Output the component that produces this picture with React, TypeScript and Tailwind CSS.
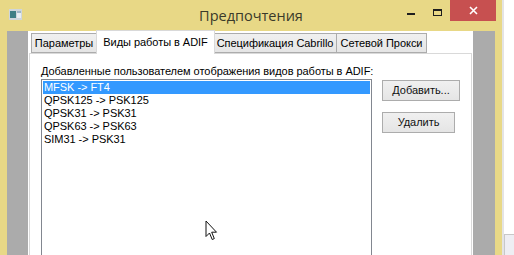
import React from "react";

const tabs = [
  { label: "Параметры", w: "w-[66px]", active: false },
  { label: "Виды работы в ADIF", w: "w-[119px]", active: true },
  { label: "Спецификация Cabrillo", w: "w-[123px]", active: false },
  { label: "Сетевой Прокси", w: "w-[90px]", active: false },
];

const modes = [
  "MFSK -> FT4",
  "QPSK125 -> PSK125",
  "QPSK31 -> PSK31",
  "QPSK63 -> PSK63",
  "SIM31 -> PSK31",
];

const AppIcon = () => (
  <svg width="13" height="11" viewBox="0 0 13 11">
    <rect x="0" y="0" width="13" height="11" fill="#cfd6dc" />
    <rect x="1" y="2" width="6" height="7" fill="#3f7f86" />
    <rect x="8" y="2" width="4" height="7" fill="#e9eef3" />
    <rect x="8" y="2" width="4" height="2" fill="#9fb6c8" />
  </svg>
);

const Cursor = () => (
  <svg
    className="absolute left-[205px] top-[220px]"
    width="13"
    height="21"
    viewBox="0 0 13 21"
  >
    <path
      d="M1 1 L1 16.5 L4.5 13 L7.2 19.5 L9.3 18.6 L6.7 12.2 L11.5 12.2 Z"
      fill="#fff"
      stroke="#111"
      strokeWidth="1"
      strokeLinejoin="round"
    />
  </svg>
);

const Button = ({ label, w }: { label: string; w: string }) => (
  <button
    className={`${w} h-[21px] whitespace-nowrap border border-[#acacac] bg-gradient-to-b from-[#f0f0f0] to-[#e5e5e5] text-[11px] leading-[19px] text-[#111]`}
  >
    {label}
  </button>
);

export default function App() {
  return (
    <div className="relative flex h-[255px] w-[514px] overflow-hidden bg-white font-['Liberation_Sans',Arial,sans-serif] text-[11px] tracking-[-0.04px] text-black">
      {/* window */}
      <div className="flex w-[502px] shrink-0 flex-col bg-[#e8d886]">
        {/* title bar */}
        <div className="flex h-[31px] shrink-0 items-start">
          <div className="w-[104px] pl-[9px] pt-[9px]">
            <AppIcon />
          </div>
          <div className="flex-1 pt-[6px] text-center font-['Open_Sans',sans-serif] text-[14.5px] leading-[20px] tracking-normal text-[#3a3a2a]">
            Предпочтения
          </div>
          <div className="flex h-[21px] w-[104px] justify-end pr-[6px]">
            <div className="flex w-[26px] flex-col items-center pt-[13px]">
              <div className="h-[2px] w-[8px] bg-[#1e1e1e]" />
            </div>
            <div className="flex w-[26px] flex-col items-center pt-[9px]">
              <div className="h-[7px] w-[9px] border border-t-2 border-[#1e1e1e]" />
            </div>
            <div className="flex w-[46px] items-center justify-center bg-[#c75050]">
              <svg width="9" height="9" viewBox="0 0 9 9">
                <path d="M1 1 L8 8 M8 1 L1 8" stroke="#fff" strokeWidth="1.6" />
              </svg>
            </div>
          </div>
        </div>

        {/* body */}
        <div className="flex flex-1 px-[7px]">
          <div className="w-[21px] bg-[#ababab]" />
          <div className="flex w-[445px] flex-col bg-white px-[1px]">
            {/* tab bar */}
            <div className="flex h-[22px] items-end pl-[2px]">
              {tabs.map((t) =>
                t.active ? (
                  <div
                    key={t.label}
                    className={`${t.w} relative z-10 -mx-[1px] -mb-[1px] flex h-[24px] items-center justify-center whitespace-nowrap border border-b-0 border-[#d9d9d9] bg-white pb-[1px]`}
                  >
                    {t.label}
                  </div>
                ) : (
                  <div
                    key={t.label}
                    className={`${t.w} flex h-[20px] items-center justify-center whitespace-nowrap border border-l-0 border-[#acacac] bg-gradient-to-b from-[#f0f0f0] to-[#e5e5e5] first:border-l`}
                  >
                    {t.label}
                  </div>
                )
              )}
            </div>
            {/* panel */}
            <div className="flex flex-1 flex-col border border-b-0 border-[#d9d9d9] pl-[11px] pt-[10px]">
              <div className="whitespace-nowrap leading-[14px]">
                Добавленные пользователем отображения видов работы в ADIF:
              </div>
              <div className="mt-[1px] flex flex-1 items-start">
                <div className="flex h-full w-[331px] flex-col border border-b-0 border-[#828790] bg-white p-[1px]">
                  {modes.map((m, i) => (
                    <div
                      key={m}
                      className={`h-[13px] pl-[1px] leading-[13px] ${
                        i === 0 ? "bg-[#3399ff] text-white" : ""
                      }`}
                    >
                      {m}
                    </div>
                  ))}
                </div>
                <div className="ml-[10px] flex flex-col gap-[11px] pt-[1px]">
                  <Button label="Добавить..." w="w-[78px]" />
                  <Button label="Удалить" w="w-[73px]" />
                </div>
              </div>
            </div>
          </div>
          <div className="w-[22px] bg-[#ababab]" />
        </div>
      </div>

      {/* area beside the window */}
      <div className="flex flex-1 flex-col border-l-2 border-[#e4e4e4]">
        <div className="mt-auto h-[21px] border-l border-t border-[#c8c8c8] bg-[#eeeef3]" />
      </div>

      <Cursor />
    </div>
  );
}
